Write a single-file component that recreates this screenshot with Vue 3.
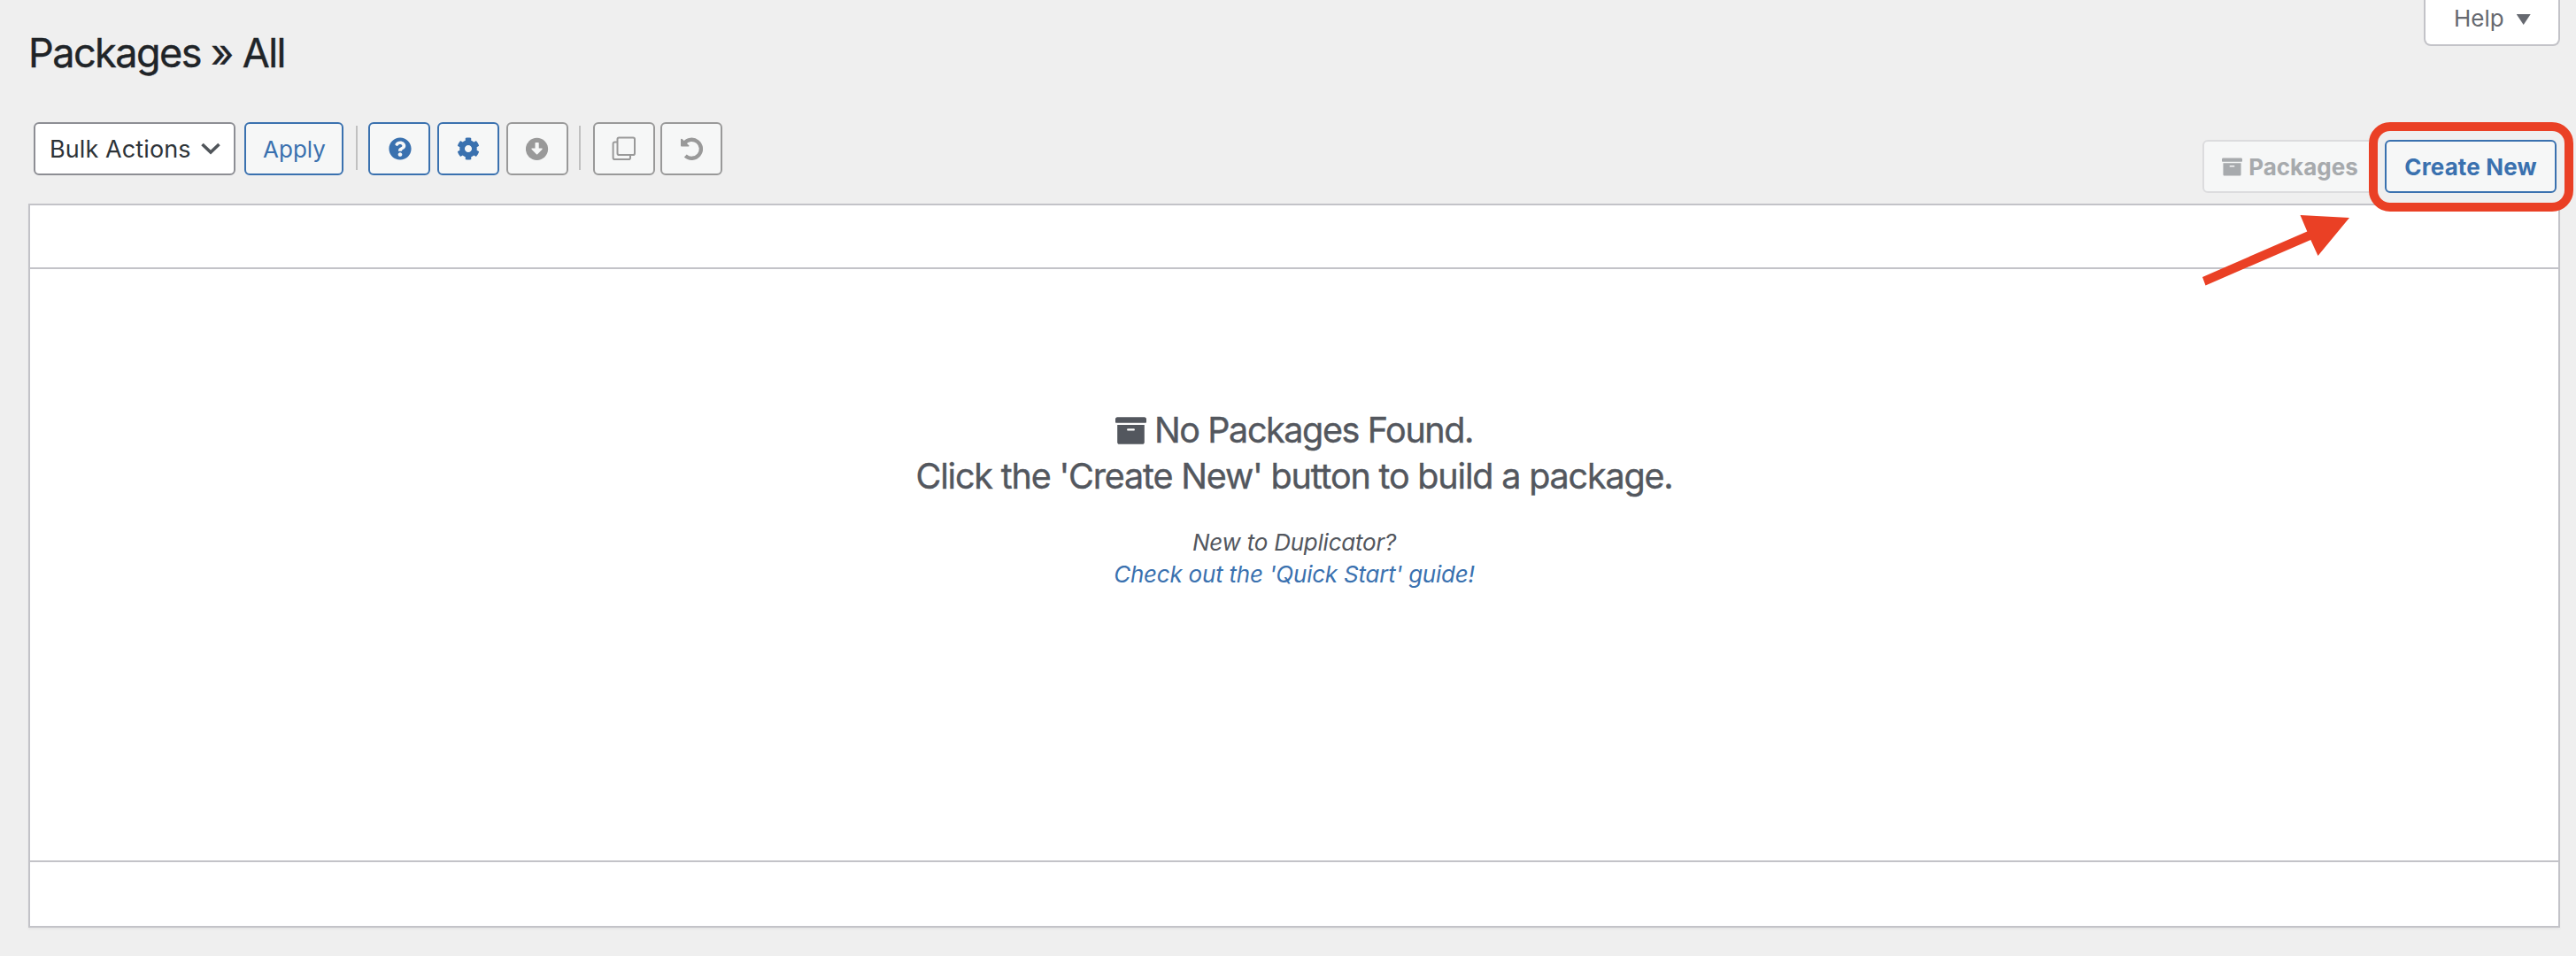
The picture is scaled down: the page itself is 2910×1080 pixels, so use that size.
<script setup>
const iconButtons = [
  { id: 'help', active: true },
  { id: 'settings', active: true },
  { id: 'import', active: false },
]
const archivePath =
  'M32 448c0 17.7 14.3 32 32 32h384c17.7 0 32-14.3 32-32V160H32v288zm160-212c0-6.6 5.4-12 12-12h104c6.6 0 12 5.4 12 12v8c0 6.6-5.4 12-12 12H204c-6.6 0-12-5.4-12-12v-8zM480 32H32C14.3 32 0 46.3 0 64v48c0 8.8 7.2 16 16 16h480c8.8 0 16-7.2 16-16V64c0-17.7-14.3-32-32-32z'
</script>

<template>
  <main class="page">
    <header class="top">
      <h1>Packages » All</h1>
      <button class="help"><span>Help</span><i class="triangle"></i></button>
    </header>

    <section class="toolbar">
      <div class="tools">
        <button class="select">
          <span>Bulk Actions</span>
          <svg width="22" height="14" viewBox="0 0 22 14"><path d="M1.5 2 11 11 20.5 2" fill="none" stroke="#50555a" stroke-width="3.6" /></svg>
        </button>
        <button class="btn apply"><span>Apply</span></button>
        <i class="sep first"></i>
        <button v-for="b in iconButtons" :key="b.id" class="btn icon" :class="{ off: !b.active }">
          <svg v-if="b.id === 'help'" class="question" width="26" height="26" viewBox="0 0 512 512"><path fill="currentColor" d="M504 256c0 136.997-111.043 248-248 248S8 392.997 8 256C8 119.083 119.043 8 256 8s248 111.083 248 248zM262.655 90c-54.497 0-89.255 22.957-116.549 63.758-3.536 5.286-2.353 12.415 2.715 16.258l34.699 26.31c5.205 3.947 12.621 3.008 16.665-2.122 17.864-22.658 30.113-35.797 57.303-35.797 20.429 0 45.698 13.148 45.698 32.958 0 14.976-12.363 22.667-32.534 33.976C247.128 238.528 216 254.941 216 296v4c0 6.627 5.373 12 12 12h56c6.627 0 12-5.373 12-12v-1.333c0-28.462 83.186-29.647 83.186-106.667 0-58.002-60.165-102-116.531-102zM256 338c-25.365 0-46 20.635-46 46 0 25.364 20.635 46 46 46s46-20.636 46-46c0-25.365-20.635-46-46-46z" /></svg>
          <svg v-else-if="b.id === 'settings'" width="26" height="26" viewBox="0 0 512 512"><path fill="currentColor" d="M487.4 315.7l-42.6-24.6c4.3-23.2 4.3-47 0-70.2l42.6-24.6c4.9-2.8 7.1-8.6 5.5-14-11.1-35.6-30-67.8-54.7-94.6-3.8-4.1-10-5.1-14.8-2.3L380.8 110c-17.9-15.4-38.5-27.3-60.8-35.1V25.8c0-5.6-3.9-10.5-9.4-11.7-36.7-8.2-74.3-7.8-109.2 0-5.5 1.2-9.4 6.1-9.4 11.7V75c-22.2 7.9-42.8 19.8-60.8 35.1L88.7 85.5c-4.9-2.8-11-1.9-14.8 2.3-24.7 26.7-43.6 58.9-54.7 94.6-1.7 5.4.6 11.2 5.5 14L67.3 221c-4.3 23.2-4.3 47 0 70.2l-42.6 24.6c-4.9 2.8-7.1 8.6-5.5 14 11.1 35.6 30 67.8 54.7 94.6 3.8 4.1 10 5.1 14.8 2.3l42.6-24.6c17.9 15.4 38.5 27.3 60.8 35.1v49.2c0 5.6 3.9 10.5 9.4 11.7 36.7 8.2 74.3 7.8 109.2 0 5.5-1.2 9.4-6.1 9.4-11.7v-49.2c22.2-7.9 42.8-19.8 60.8-35.1l42.6 24.6c4.9 2.8 11 1.9 14.8-2.3 24.7-26.7 43.6-58.9 54.7-94.6 1.5-5.5-.7-11.3-5.6-14.1zM256 336c-44.1 0-80-35.9-80-80s35.9-80 80-80 80 35.9 80 80-35.9 80-80 80z" /></svg>
          <svg v-else width="26" height="26" viewBox="0 0 26 26"><circle cx="12.500" cy="13.300" r="12.600" fill="currentColor" /><path fill="#f6f7f7" d="M11.100 6h3q.6 0 .6.6v6h3.400q1.100.1.4 1.100l-5.300 5.500q-.6.5-1.200 0l-5.400-5.500q-.7-1 .4-1.100h3.500v-6q0-.6.6-.6z" /></svg>
        </button>
        <i class="sep second"></i>
        <button class="btn icon off">
          <svg width="28" height="28" viewBox="0 0 28 28" fill="none" stroke="currentColor" stroke-width="2"><rect x="6.500" y="1.500" width="19.500" height="19.500" rx="1.800" /><path d="M6.500 6.500H3.500Q1.600 6.500 1.600 8.300V24.200Q1.600 26 3.400 26H19.200Q21 26 21 24.200V21" /></svg>
        </button>
        <button class="btn icon off undo">
          <svg width="28" height="28" viewBox="0 0 28 28"><path d="M6 8A10.500 10.500 0 1 1 7.300 22" fill="none" stroke="currentColor" stroke-width="4.300" /><path d="M2 3.200Q2.600 2.200 3.600 3L11.300 10.200Q12 11.200 10.800 11.400H3Q2 11.400 2 10.400z" fill="currentColor" /></svg>
        </button>
      </div>
      <nav class="tabs">
        <span class="btn packages"><svg width="23" height="23" viewBox="0 0 512 512"><path :d="archivePath" fill="currentColor" /></svg><span>Packages</span></span>
        <button class="btn create"><span>Create New</span></button>
      </nav>
    </section>

    <section class="table">
      <div class="bar head"></div>
      <div class="empty">
        <div class="big found"><svg width="35" height="35" viewBox="0 0 512 512"><path :d="archivePath" fill="currentColor" /></svg><span>No Packages Found.</span></div>
        <div class="big"><span>Click the 'Create New' button to build a package.</span></div>
        <div class="small">New to Duplicator?</div>
        <a class="small">Check out the 'Quick Start' guide!</a>
      </div>
      <div class="bar foot"></div>
    </section>

    <div class="highlight"></div>
    <svg class="arrow" width="170" height="86" viewBox="0 0 170 86"><path fill="#ea4025" d="M2 71 120.300 19.500 112.500 1 168 4 132.500 47 124.300 29 5.500 80.500z" /></svg>
  </main>
</template>

<style>
body {
  margin: 0;
  background: #efefef;
}
</style>

<style scoped>
* {
  box-sizing: border-box;
}
.page {
  position: relative;
  width: 2910px;
  height: 1080px;
  padding: 0 18px 0 32px;
  overflow: hidden;
  background: #efefef;
  font-family: Inter, 'Liberation Sans', sans-serif;
  font-size: 26px;
  color: #53575e;
}
button {
  font: inherit;
  margin: 0;
  padding: 0;
}
span {
  white-space: nowrap;
}
.top {
  display: flex;
  justify-content: space-between;
  height: 138px;
}
h1 {
  margin: 0;
  padding-top: 30px;
  font-size: 45px;
  line-height: 60px;
  font-weight: 400;
  letter-spacing: -1.55px;
  color: #1f2428;
  -webkit-text-stroke: 0.4px currentColor;
}
.help {
  display: flex;
  justify-content: flex-start;
  width: 154px;
  height: 52px;
  padding-left: 32px;
  border: 2px solid #c3c3c8;
  border-top: 0;
  border-radius: 0 0 8px 8px;
  background: #fff;
  color: #666970;
  line-height: 42px;
}
.triangle {
  margin: 16px 0 0 14px;
  width: 16px;
  height: 12px;
  background: currentColor;
  clip-path: polygon(0 0, 100% 0, 50% 100%);
}
.toolbar {
  display: flex;
  justify-content: space-between;
  height: 92px;
}
.tools {
  display: flex;
  padding-left: 6px;
}
.select {
  display: flex;
  align-items: center;
  justify-content: space-between;
  width: 228px;
  height: 60px;
  padding: 0 15px 0 16px;
  border: 2px solid #8d8e94;
  border-radius: 6px;
  background: #fff;
  font-size: 27px;
  letter-spacing: 0.1px;
  color: #2d3338;
}
.btn {
  display: flex;
  align-items: center;
  justify-content: center;
  height: 60px;
  border: 2px solid #3a71af;
  border-radius: 6px;
  background: #f6f7f7;
  color: #3a71af;
}
.apply {
  width: 112px;
  margin-left: 10px;
  padding-left: 1px;
}
.sep {
  width: 2px;
  height: 50px;
  margin-top: 4px;
  background: #c0c0c0;
}
.first {
  margin-left: 14px;
  margin-right: 4px;
}
.icon {
  width: 70px;
  margin-left: 8px;
}
.question {
  margin-left: 1.5px;
}
.second {
  margin-left: 12px;
  margin-right: 6px;
}
.undo {
  margin-left: 6px;
}
.off {
  border-color: #999;
  color: #999;
}
.tabs {
  display: flex;
  gap: 8px;
  padding: 20px 4px 0 0;
  font-weight: 700;
}
.packages {
  width: 198px;
  gap: 7px;
  border-color: #dcdcde;
  color: #a7aaad;
}
.create {
  width: 194px;
  letter-spacing: 0.15px;
}
.table {
  width: 2860px;
  height: 818px;
  display: flex;
  flex-direction: column;
  border: 2px solid #c3c3c8;
  background: #fff;
  box-shadow: 0 2px 2px rgba(0, 0, 0, 0.04);
}
.head {
  height: 72px;
  border-bottom: 2px solid #c3c3c8;
}
.foot {
  height: 74px;
  border-top: 2px solid #c3c3c8;
}
.empty {
  flex: 1;
  display: flex;
  flex-direction: column;
  align-items: center;
  padding-top: 156px;
}
.big {
  display: flex;
  align-items: center;
  height: 52px;
  gap: 9px;
  font-size: 39.5px;
  letter-spacing: -1.18px;
  -webkit-text-stroke: 0.4px currentColor;
}
.found {
  letter-spacing: -1.4px;
}
.small {
  height: 36px;
  line-height: 36px;
  font-style: italic;
  letter-spacing: -0.23px;
}
.big + .small {
  margin-top: 31px;
}
a.small {
  color: #3a71af;
}
.highlight {
  position: absolute;
  left: 2676px;
  top: 138px;
  width: 231px;
  height: 101px;
  border: 10px solid #ea4025;
  border-radius: 24px;
}
.arrow {
  position: absolute;
  left: 2486px;
  top: 242px;
}
</style>
